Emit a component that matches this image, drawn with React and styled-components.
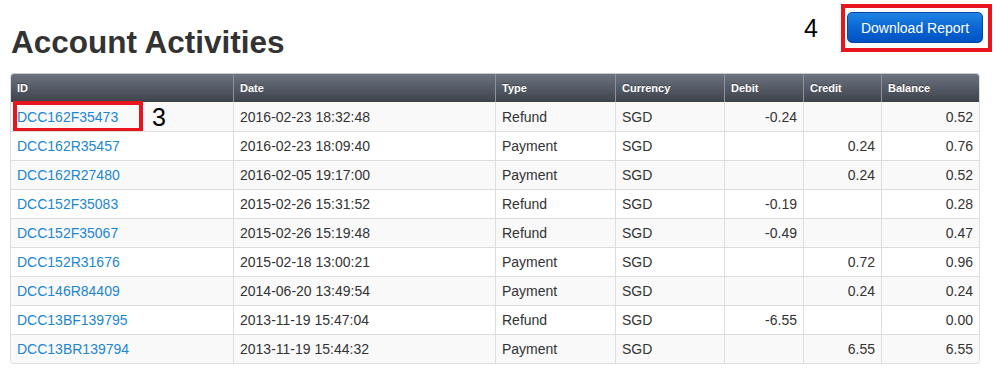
import React from 'react';
import styled, { createGlobalStyle } from 'styled-components';

const GlobalStyle = createGlobalStyle`
  body {
    margin: 0;
    background: #ffffff;
    font-family: "Liberation Sans", Arial, sans-serif;
    color: #333333;
  }
`;

const Page = styled.div`
  padding: 0 10px;
  width: 970px;
`;

const TopBar = styled.div`
  display: flex;
  justify-content: space-between;
  align-items: flex-start;
  height: 73px;
`;

const Title = styled.h1`
  margin: 27px 0 0 1px;
  font-size: 31.5px;
  line-height: 31px;
  font-weight: 700;
  color: #333333;
`;

const Actions = styled.div`
  display: flex;
  align-items: center;
  gap: 23px;
  margin-top: 4px;
  margin-right: -12px;
`;

const StepLabel = styled.span`
  font-family: "Liberation Sans", Arial, sans-serif;
  font-size: 25px;
  line-height: 25px;
  color: #000000;
`;

const Highlight = styled.div`
  border: 4px solid #e8141e;
  padding: 4px 5px 5px 2px;
`;

const Button = styled.button`
  display: block;
  width: 136px;
  height: 31px;
  padding: 0;
  border: 1px solid #0048a6;
  border-radius: 5px;
  background: linear-gradient(to bottom, #1f84e4 0%, #0a66d2 50%, #0052c2 100%);
  color: #ffffff;
  font-family: "Liberation Sans", Arial, sans-serif;
  font-size: 14px;
  cursor: pointer;
`;

const TableWrap = styled.div`
  border: 1px solid #dddddd;
  border-top-color: #c8cbd0;
  border-radius: 4px;
  overflow: hidden;
`;

const Table = styled.table`
  width: 100%;
  table-layout: fixed;
  border-collapse: separate;
  border-spacing: 0;
  font-size: 14px;
`;

const Th = styled.th`
  box-sizing: border-box;
  width: ${(p) => p.$w}px;
  padding: 6px 6px;
  line-height: 16px;
  font-size: 11px;
  font-weight: 700;
  text-align: left;
  color: #ffffff;
  text-shadow: 0 -1px 0 rgba(0, 0, 0, 0.35);
  background: linear-gradient(to bottom, #6c7380 0%, #555b66 50%, #3d424a 100%);
  border-left: 1px solid #8d939c;
  &:first-child {
    border-left: none;
  }
`;

const Row = styled.tr`
  background: ${(p) => (p.$striped ? '#f9f9f9' : '#ffffff')};
`;

const Td = styled.td`
  position: relative;
  box-sizing: border-box;
  padding: 6px 6px;
  line-height: 16px;
  color: #333333;
  text-align: ${(p) => (p.$num ? 'right' : 'left')};
  border-top: 1px solid #dddddd;
  border-left: 1px solid #dddddd;
  white-space: nowrap;
  &:first-child {
    border-left: none;
  }
  ${Row}:first-child & {
    border-top: none;
    padding-top: 7px;
  }
`;

const Link = styled.a`
  color: #1c86d0;
  text-decoration: none;
`;

const CellMark = styled.div`
  position: absolute;
  left: 2px;
  top: -1px;
  width: 130px;
  height: 31px;
  box-sizing: border-box;
  border: 4px solid #e8141e;
  pointer-events: none;
`;

const CellStep = styled.span`
  position: absolute;
  left: 141px;
  top: 3px;
  font-size: 25px;
  line-height: 25px;
  color: #000000;
`;

const columns = [
  { label: 'ID', width: 222 },
  { label: 'Date', width: 262 },
  { label: 'Type', width: 120 },
  { label: 'Currency', width: 109 },
  { label: 'Debit', width: 79 },
  { label: 'Credit', width: 78 },
  { label: 'Balance', width: 98 },
];

const rows = [
  ['DCC162F35473', '2016-02-23 18:32:48', 'Refund', 'SGD', '-0.24', '', '0.52'],
  ['DCC162R35457', '2016-02-23 18:09:40', 'Payment', 'SGD', '', '0.24', '0.76'],
  ['DCC162R27480', '2016-02-05 19:17:00', 'Payment', 'SGD', '', '0.24', '0.52'],
  ['DCC152F35083', '2015-02-26 15:31:52', 'Refund', 'SGD', '-0.19', '', '0.28'],
  ['DCC152F35067', '2015-02-26 15:19:48', 'Refund', 'SGD', '-0.49', '', '0.47'],
  ['DCC152R31676', '2015-02-18 13:00:21', 'Payment', 'SGD', '', '0.72', '0.96'],
  ['DCC146R84409', '2014-06-20 13:49:54', 'Payment', 'SGD', '', '0.24', '0.24'],
  ['DCC13BF139795', '2013-11-19 15:47:04', 'Refund', 'SGD', '-6.55', '', '0.00'],
  ['DCC13BR139794', '2013-11-19 15:44:32', 'Payment', 'SGD', '', '6.55', '6.55'],
];

const App = () => (
  <>
    <GlobalStyle />
    <Page>
      <TopBar>
        <Title>Account Activities</Title>
        <Actions>
          <StepLabel>4</StepLabel>
          <Highlight>
            <Button>Download Report</Button>
          </Highlight>
        </Actions>
      </TopBar>
      <TableWrap>
        <Table>
          <thead>
            <tr>
              {columns.map((c) => (
                <Th key={c.label} $w={c.width}>
                  {c.label}
                </Th>
              ))}
            </tr>
          </thead>
          <tbody>
            {rows.map(([id, date, type, cur, debit, credit, bal], i) => (
              <Row key={id} $striped={i % 2 === 0}>
                <Td>
                  <Link href="#">{id}</Link>
                  {i === 0 && (
                    <>
                      <CellMark />
                      <CellStep>3</CellStep>
                    </>
                  )}
                </Td>
                <Td>{date}</Td>
                <Td>{type}</Td>
                <Td>{cur}</Td>
                <Td $num>{debit}</Td>
                <Td $num>{credit}</Td>
                <Td $num>{bal}</Td>
              </Row>
            ))}
          </tbody>
        </Table>
      </TableWrap>
    </Page>
  </>
);

export default App;
